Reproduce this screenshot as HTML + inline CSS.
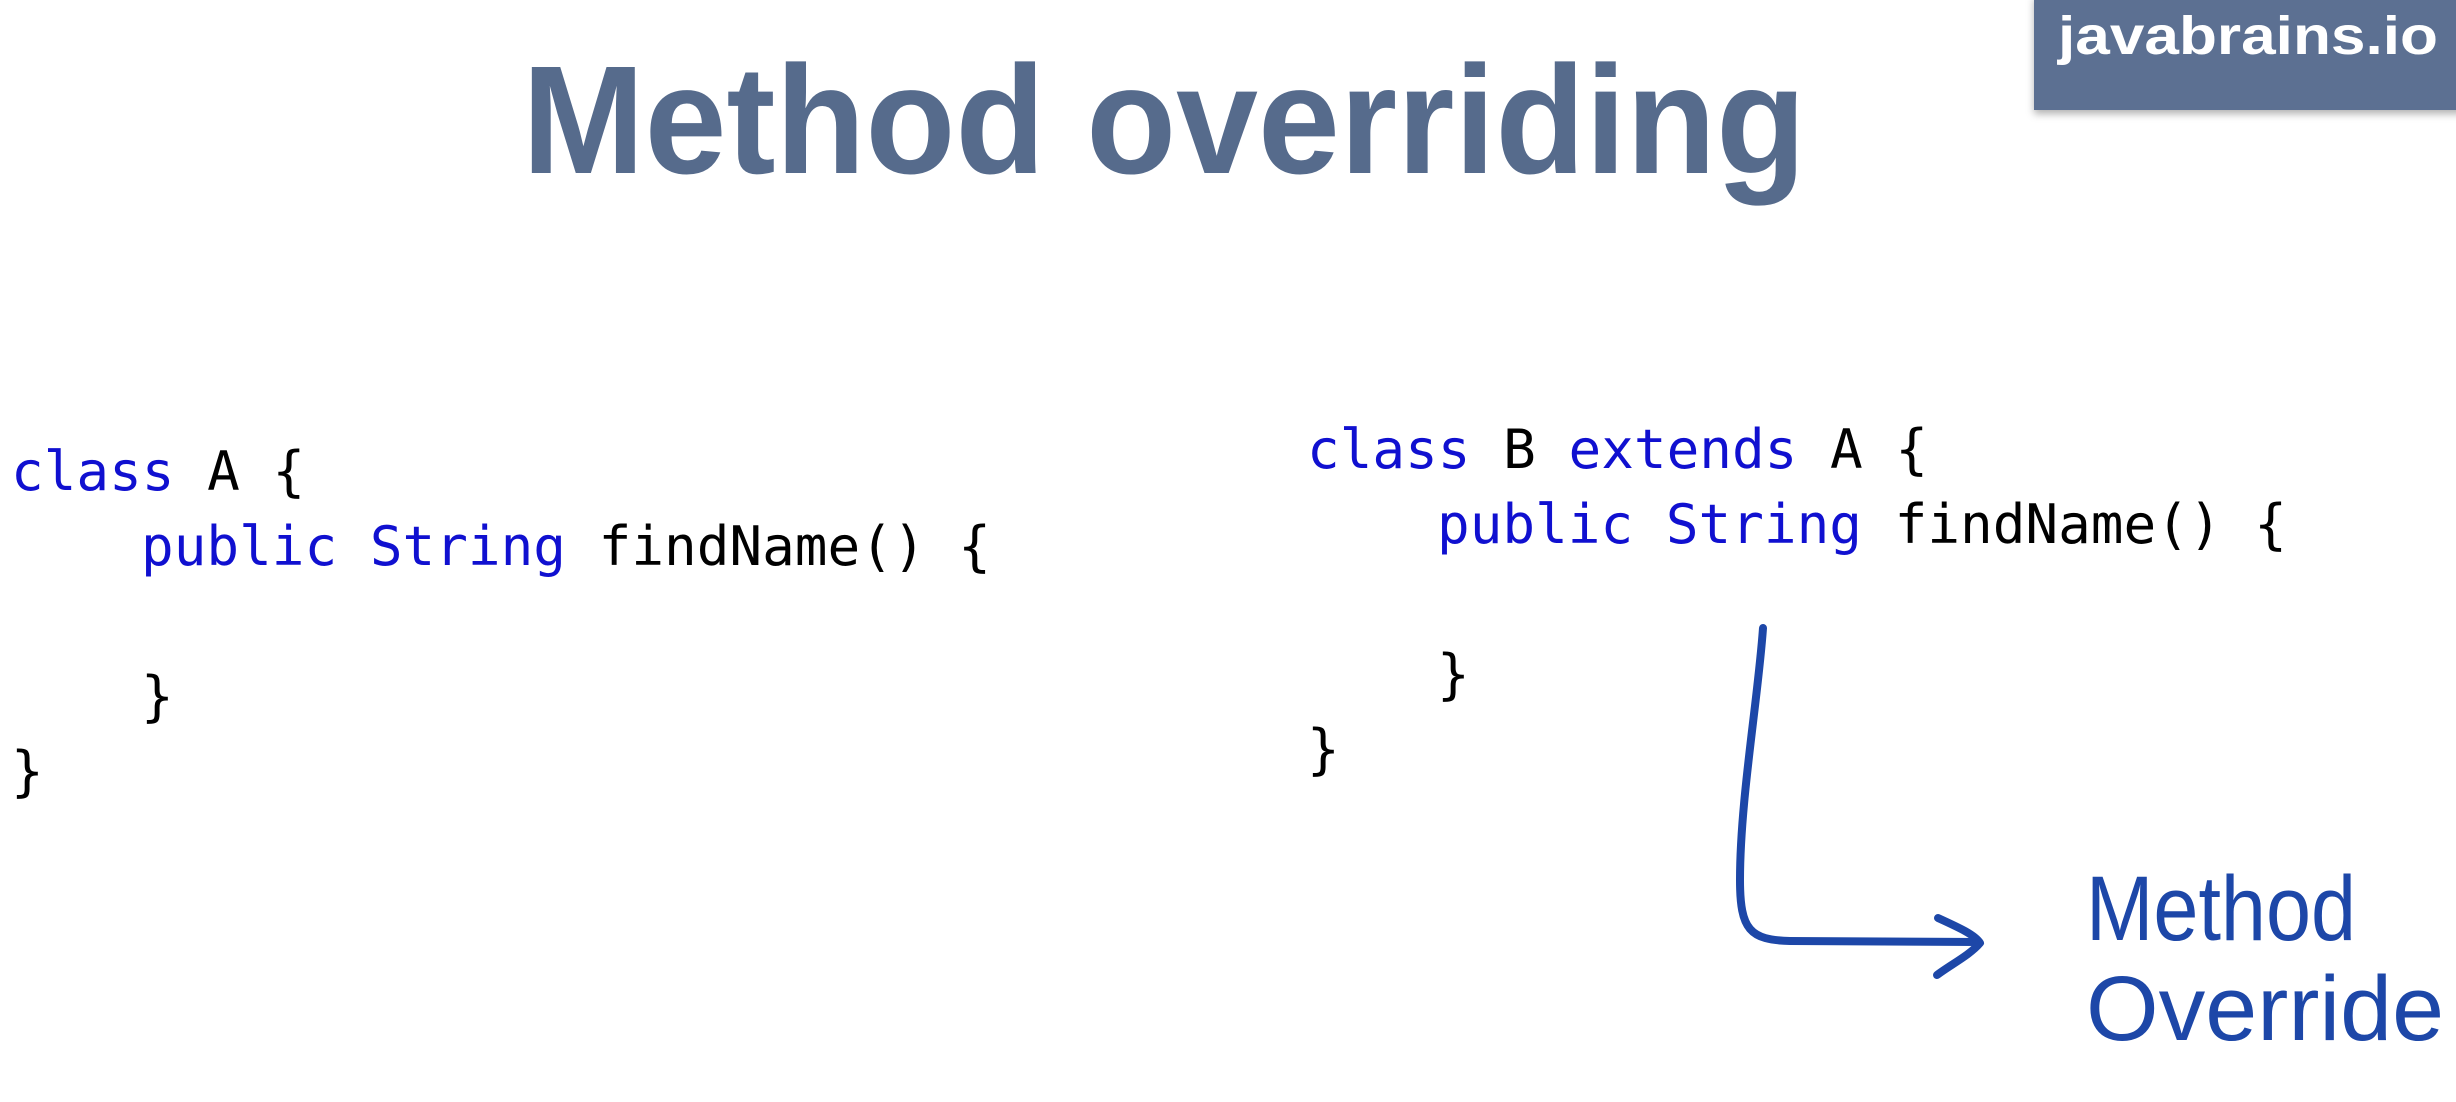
<!DOCTYPE html>
<html><head><meta charset="utf-8"><style>
html,body{margin:0;padding:0;background:#fff;width:2456px;height:1102px;overflow:hidden}
svg{display:block}
.code text{font-family:"DejaVu Sans Mono","Liberation Mono",monospace;font-size:54.3px;fill:#000;white-space:pre}
.k{fill:#1010d0}
</style></head><body>
<svg width="2456" height="1102" viewBox="0 0 2456 1102" xmlns="http://www.w3.org/2000/svg">
<defs><filter id="sh" x="-10%" y="-10%" width="130%" height="150%"><feDropShadow dx="0" dy="4" stdDeviation="4" flood-color="#000" flood-opacity="0.3"/></filter></defs>
<rect x="2034" y="-5" width="430" height="115" fill="#5b7092" filter="url(#sh)"/>
<text x="2058" y="54" font-family="Liberation Sans, sans-serif" font-weight="bold" font-size="54" fill="#fff" textLength="380" lengthAdjust="spacingAndGlyphs">javabrains.io</text>
<text x="522" y="173" font-family="Liberation Sans, sans-serif" font-weight="bold" font-size="154" fill="#566b8c" textLength="1284" lengthAdjust="spacingAndGlyphs">Method overriding</text>

<g class="code">
<text x="11" y="490"><tspan class="k">class</tspan> A {</text>
<text x="141" y="565"><tspan class="k">public</tspan> <tspan class="k">String</tspan> findName() {</text>
<text x="141" y="715">}</text>
<text x="11" y="790">}</text>
<text x="1307" y="468"><tspan class="k">class</tspan> B <tspan class="k">extends</tspan> A {</text>
<text x="1437" y="543"><tspan class="k">public</tspan> <tspan class="k">String</tspan> findName() {</text>
<text x="1437" y="693">}</text>
<text x="1307" y="768">}</text>
</g>

<g fill="none" stroke="#1d47a8" stroke-width="8" stroke-linecap="round" stroke-linejoin="round">
<path d="M1763 628 C1758 700 1740 800 1740 880 C1740 930 1750 940 1790 941 L1978 942"/>
<path d="M1938 918 C1960 928 1975 935 1980 943 C1970 955 1950 965 1937 975"/>
</g>
<g fill="#1d47a8" font-family="Liberation Sans, sans-serif" font-size="92">
<text x="2086" y="940" textLength="270" lengthAdjust="spacingAndGlyphs">Method</text>
<text x="2086" y="1040" textLength="358" lengthAdjust="spacingAndGlyphs">Override</text>
</g>
</svg>
</body></html>
